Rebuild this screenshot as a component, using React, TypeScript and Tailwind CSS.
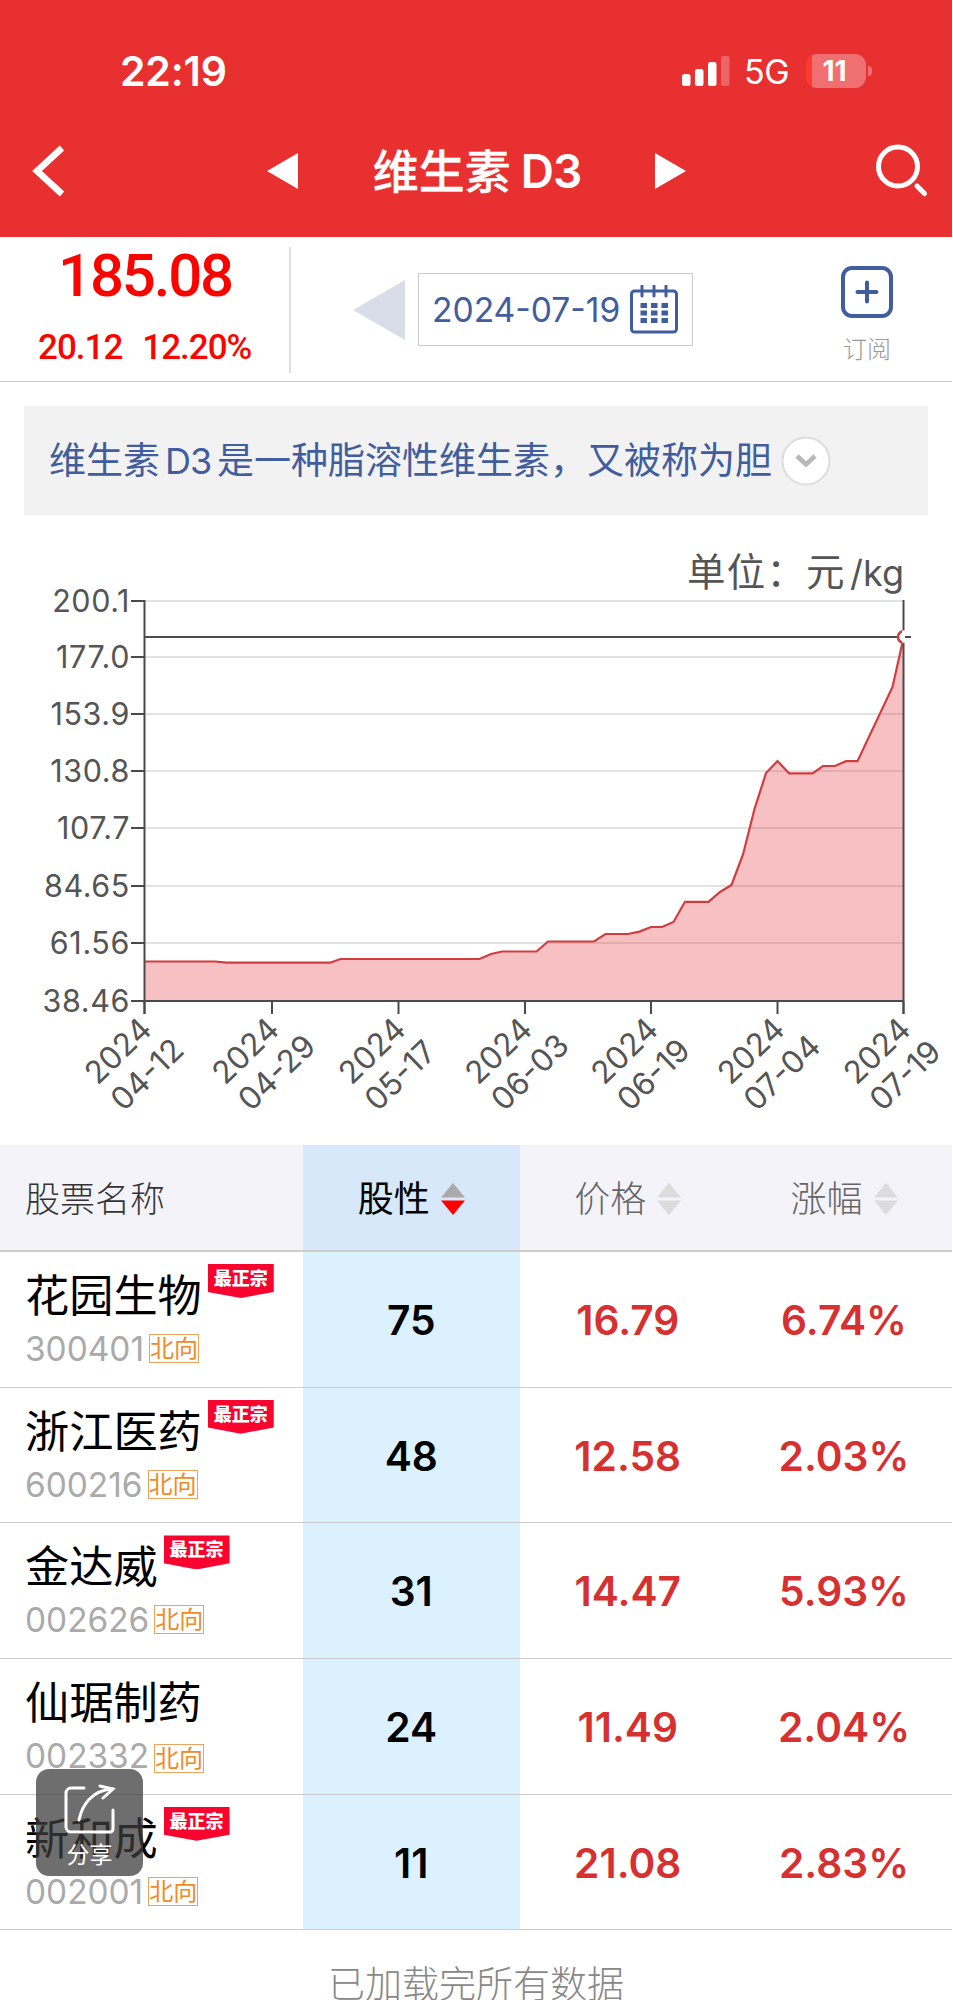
import clsx from "clsx";

const POINTS: [number, number][] = [
  [144.5, 961.5], [215, 961.5], [226.5, 962.7], [330, 962.7], [340.5, 959], [479.5, 959],
  [491, 954], [502, 951.5], [536.5, 951.5], [548, 941.5], [594, 941.5], [605.5, 934],
  [628, 934], [639.5, 931.6], [651, 927], [662, 927], [673.5, 922], [685, 901.8],
  [708.5, 901.8], [720, 892], [731.5, 885], [743, 854.5], [754.5, 809], [766, 773],
  [777.5, 761], [789, 773.3], [812.5, 773.3], [823, 766], [835, 766], [846, 761.2],
  [857.5, 761.2], [892.5, 687], [903.5, 638],
];

const Y_TICKS = [
  { y: 601, label: "200.1" },
  { y: 657, label: "177.0" },
  { y: 714, label: "153.9" },
  { y: 771, label: "130.8" },
  { y: 828, label: "107.7" },
  { y: 886, label: "84.65" },
  { y: 943, label: "61.56" },
  { y: 1001, label: "38.46" },
];

const X_TICKS = [
  { x: 144.5, label: "04-12" },
  { x: 272, label: "04-29" },
  { x: 398.5, label: "05-17" },
  { x: 525, label: "06-03" },
  { x: 651, label: "06-19" },
  { x: 777.5, label: "07-04" },
  { x: 903.5, label: "07-19" },
];

const STOCKS = [
  { name: "花园生物", code: "300401", score: "75", price: "16.79", change: "6.74%", top: true },
  { name: "浙江医药", code: "600216", score: "48", price: "12.58", change: "2.03%", top: true },
  { name: "金达威", code: "002626", score: "31", price: "14.47", change: "5.93%", top: true },
  { name: "仙琚制药", code: "002332", score: "24", price: "11.49", change: "2.04%", top: false },
  { name: "新和成", code: "002001", score: "11", price: "21.08", change: "2.83%", top: true },
];

const COLS = "grid grid-cols-[303px_216.5px_216.5px_216px]";

function StatusBar() {
  return (
    <div className="flex h-[72px] items-center justify-between pr-[80px] pl-[120px]">
      <span className="text-[41px] leading-none font-semibold tracking-[-0.2px]">22:19</span>
      <div className="flex items-center">
        <svg width="48" height="32" viewBox="0 0 48 32" fill="white">
          <rect x="0" y="19" width="8.5" height="12" rx="2.5" />
          <rect x="13" y="14" width="8.5" height="17" rx="2.5" />
          <rect x="26" y="7" width="8.5" height="24" rx="2.5" />
          <rect x="39" y="1" width="8.5" height="30" rx="2.5" opacity="0.25" />
        </svg>
        <span className="ml-[14px] w-[62px] pt-[2px] text-[34px] leading-none font-normal tracking-[-0.500px]">5G</span>
        <div className="flex h-[34px] w-[60px] items-center justify-center overflow-hidden rounded-[11px] bg-[linear-gradient(90deg,#fb3a32_10%,#f07072_10%)] pr-[3px] text-[28px] leading-none font-bold">
          11
        </div>
        <div className="ml-[2px] h-[10px] w-[4px] rounded-r-full bg-[#f07072]" />
      </div>
    </div>
  );
}

function NavBar() {
  return (
    <div className="flex h-[72px] items-center pl-[31px]">
      <svg width="36" height="54" viewBox="0 0 36 54" fill="none" stroke="white" strokeWidth="6.500">
        <path d="M31 4 6 27l25 23" />
      </svg>
      <svg className="ml-[200px]" width="32" height="38" viewBox="0 0 32 38" fill="white">
        <path d="M0 19 31 1v36z" />
      </svg>
      <div className="flex w-[356px] justify-center gap-[10px] text-[46px] leading-none font-medium">
        <span className="[-webkit-text-stroke:0.300px_white]">维生素</span>
        <span className="font-semibold tracking-[-1px]">D3</span>
      </div>
      <svg width="32" height="38" viewBox="0 0 32 38" fill="white">
        <path d="M31 19 0 1v36z" />
      </svg>
      <svg className="ml-[188px]" width="54" height="54" viewBox="0 0 54 54" fill="none" stroke="white" strokeWidth="5">
        <circle cx="23" cy="22.500" r="19.500" />
        <path d="m42 42 7.500 7.500" strokeLinecap="round" />
      </svg>
    </div>
  );
}

function Calendar() {
  return (
    <svg width="48" height="49" viewBox="0 0 48 49" fill="none" stroke="#425d9d" strokeWidth="3">
      <rect x="1.500" y="6" width="45" height="41" rx="3" />
      <path d="M12 1v10M24 1v10M36 1v10" strokeLinecap="round" />
      {[18, 25.5, 33].map((y) =>
        [10.5, 21, 31.5].map((x) => (
          <rect key={`${x}-${y}`} x={x} y={y} width="6.500" height="5" fill="#425d9d" stroke="none" />
        ))
      )}
    </svg>
  );
}

function Summary() {
  return (
    <section className="flex h-[145px] border-b border-[#c8c8c8]">
      <div className="mt-[10px] h-[126px] w-[291px] border-r-2 border-[#dedede] font-['Roboto'] text-[#f80500]">
        <p className="pt-[6px] pl-[58px] text-[60px] leading-[46px] font-medium tracking-[-2.2px]">185.08</p>
        <p className="flex gap-[20px] pt-[35px] pl-[38px] text-[35px] leading-[28px] font-medium tracking-[-1px]">
          <span>20.12</span>
          <span>12.20%</span>
        </p>
      </div>
      <svg className="mt-[42px] ml-[62px]" width="52" height="62" viewBox="0 0 52 62" fill="#d9dde7">
        <path d="M0 31 52 1v60z" />
      </svg>
      <div className="mt-[36px] ml-[13px] flex h-[73px] w-[275px] items-center border border-[#ccc] pl-[13px]">
        <span className="w-[198px] text-[33.600px] leading-none text-[#425d9d]">2024-07-19</span>
        <Calendar />
      </div>
      <div className="ml-[134px] flex w-[80px] flex-col items-center pt-[29px]">
        <svg width="52" height="52" viewBox="0 0 52 52" fill="none" stroke="#425d9d" strokeWidth="4">
          <rect x="2" y="2" width="48" height="48" rx="9" />
          <path d="M26 16.500v19M16.500 26h19" strokeLinecap="round" />
        </svg>
        <span className="mt-[20px] text-[24px] leading-none font-light text-[#999]">订阅</span>
      </div>
    </section>
  );
}

function Intro() {
  return (
    <section className="mx-[24px] mt-[24px] flex h-[109px] items-center bg-[#f2f2f2] pl-[25px] text-[37px] text-[#425d9d]">
      <span className="w-[116px]">维生素</span>
      <span className="w-[52px] text-[36px] tracking-[-1px]">D3</span>
      <span className="w-[555px] whitespace-nowrap">是一种脂溶性维生素，又被称为胆</span>
      <svg className="ml-[9px]" width="50" height="50" viewBox="0 0 50 50" fill="none">
        <circle cx="25" cy="25" r="23.500" fill="white" stroke="#ddd" strokeWidth="2" />
        <path d="m16 20 9 8.500L34 20" stroke="#b8b8b8" strokeWidth="4.500" />
      </svg>
    </section>
  );
}

function PriceChart() {
  const line = POINTS.map((p) => p.join(",")).join(" ");
  return (
    <svg className="block" width="952" height="630" viewBox="0 515 952 630" fill="none">
      <g fill="#555">
        <text x="687" y="586" fontSize="38.500" letterSpacing="1.2">单位：元</text>
        <text x="850" y="586" fontSize="36">/kg</text>
      </g>
      {Y_TICKS.map((t) => (
        <g key={t.label}>
          <path d={`M145 ${t.y}H903`} stroke="#d9d9d9" strokeWidth="1.500" />
          <path d={`M131 ${t.y}H145`} stroke="#4a4a4c" strokeWidth="2" />
          <text x="130" y={t.y + 11} fontSize="30.500" letterSpacing="0.6" fill="#555" textAnchor="end">{t.label}</text>
        </g>
      ))}
      <polygon points={`${line} 903.5,1001 144.5,1001`} fill="#e6323c" fillOpacity="0.3" />
      <polyline points={line} stroke="#d23c3f" strokeWidth="2.200" />
      <path d="M144.500 600V1014M903.500 600V1014M144 1001H904M144 637H911" stroke="#4a4a4c" strokeWidth="2" />
      {X_TICKS.map((t) => (
        <g key={t.label} fill="#555" fontSize="31.500">
          <path d={`M${t.x} 1001V1014`} stroke="#4a4a4c" strokeWidth="2" />
          <text transform={`translate(${t.x - 47} 1086) rotate(-44)`}>2024</text>
          <text transform={`translate(${t.x - 21} 1112.5) rotate(-44)`}>{t.label}</text>
        </g>
      ))}
      {/* half marker on the last value */}
      <path d="M904 631a6 6 0 0 0 0 12z" fill="white" />
      <path d="M904 631a6 6 0 0 0 0 12" stroke="#d23c3f" strokeWidth="2.500" />
      <path d="M903.500 630.500v12" stroke="white" strokeWidth="3" />
    </svg>
  );
}

function SortArrows({ active = false }: { active?: boolean }) {
  return (
    <svg width="24" height="32" viewBox="0 0 24 32">
      <path d="M12 0 24 14.500H0z" fill={active ? "#aaa" : "#dcdcde"} />
      <path d="M12 32 0 17.500h24z" fill={active ? "#ff0000" : "#dcdcde"} />
    </svg>
  );
}

function HeadCell({ label, active = false }: { label: string; active?: boolean }) {
  return (
    <div
      className={clsx(
        "flex items-center justify-center gap-[11px] pt-[3px] text-[36px] leading-none",
        active ? "bg-[#d6e8f9] text-black" : "font-light text-[#666]"
      )}
    >
      <span>{label}</span>
      <SortArrows active={active} />
    </div>
  );
}

function Badge() {
  return (
    <div className="ml-[6px] h-[34px] w-[66px] bg-[#f9042f] pt-[6px] text-center text-[18px] leading-[18px] font-black text-white [clip-path:polygon(0_0,100%_0,100%_82%,50%_100%,0_82%)]">
      最正宗
    </div>
  );
}

function StockTable() {
  return (
    <section>
      <div className={`${COLS} h-[107px] border-b-2 border-[#ccc] bg-[#f4f3fa]`}>
        <div className="flex items-center pt-[4px] pl-[25px] text-[35px] font-light text-[#333]">股票名称</div>
        <HeadCell label="股性" active />
        <HeadCell label="价格" />
        <HeadCell label="涨幅" />
      </div>
      {STOCKS.map((s) => (
        <div key={s.code} className={`${COLS} h-[135.700px] border-b-[1.500px] border-[#ccc] text-[40.700px] leading-none font-semibold text-[#d63031]`}>
          <div className="pt-[12px] pl-[25px] font-normal">
            <div className="flex h-[64px]">
              <span className="pt-[10px] text-[44.200px] leading-[44px] text-black">{s.name}</span>
              {s.top && <Badge />}
            </div>
            <div className="flex items-start text-[#aaa]">
              <span className="pt-[5px] text-[33.400px] leading-[32px]">{s.code}</span>
              <span
                className={clsx(
                  "ml-[5px] h-[29px] w-[50px] border border-[#eea35c] text-center text-[24px] leading-[28px] text-[#f08a24]",
                  s.top ? "mt-[6px]" : "mt-[9px]"
                )}
              >
                北向
              </span>
            </div>
          </div>
          <div className="flex items-center justify-center bg-[#dcf1fe] pt-[4px] text-black">{s.score}</div>
          <div className="flex items-center justify-center pt-[4px]">{s.price}</div>
          <div className="flex items-center justify-center pt-[4px]">{s.change}</div>
        </div>
      ))}
    </section>
  );
}

function ShareButton() {
  return (
    <button className="absolute top-[1769px] left-[36px] flex h-[107px] w-[107px] flex-col items-center rounded-[13px] bg-[rgba(60,60,60,0.740)] pt-[15px] text-white">
      <svg width="52" height="52" viewBox="0 0 52 52" fill="none" stroke="white" strokeWidth="3" strokeLinecap="round">
        <path d="M20 4H7a5 5 0 0 0-5 5v34a5 5 0 0 0 5 5h39a3 3 0 0 0 3-3V26" />
        <path d="M15 36C18 21 28 6 49 5M36 2l13 3-10 9" />
      </svg>
      <span className="mt-[7px] text-[23px] leading-[24px]">分享</span>
    </button>
  );
}

export default function App() {
  return (
    <div className="h-[2000px] w-full overflow-hidden bg-white font-['Inter','Noto_Sans_CJK_SC',sans-serif]">
      <div className="relative w-[952px]">
        <header className="h-[237px] bg-[#e83030] pt-[35px] text-white">
          <StatusBar />
          <div className="pt-[28px]">
            <NavBar />
          </div>
        </header>
        <Summary />
        <Intro />
        <PriceChart />
        <StockTable />
        <p className="mt-[36px] text-center text-[37px] leading-[37px] font-light text-[#888]">已加载完所有数据</p>
        <ShareButton />
      </div>
    </div>
  );
}
